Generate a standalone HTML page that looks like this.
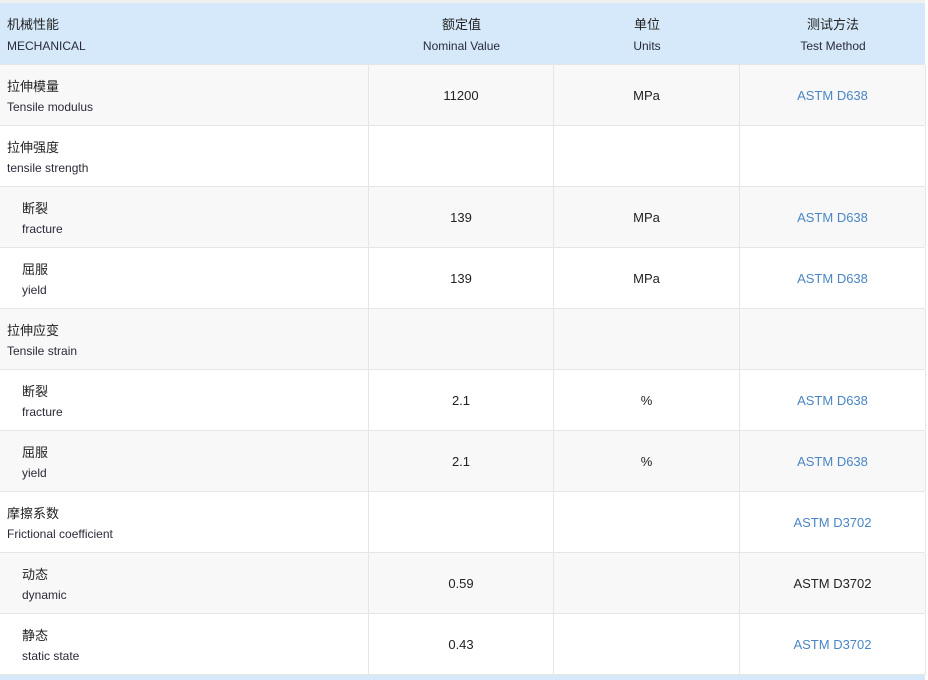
<!DOCTYPE html>
<html><head><meta charset="utf-8"><style>
body{margin:0;width:928px;height:680px;background:#fff;overflow:hidden;font-family:"Liberation Sans","Noto Sans CJK SC",sans-serif;color:#222;}
.top{position:absolute;left:0;top:0;width:925px;height:3px;background:#f0f0f0}
.r{position:absolute;left:0;width:925px;height:60px;border-bottom:1px solid #e6e6e6;}
.c{position:absolute;top:0;height:60px;border-right:1px solid #e6e6e6;box-sizing:border-box;}
.c1{left:0;width:369px}.c2{left:369px;width:185px;text-align:center}.c3{left:554px;width:186px;text-align:center}.c4{left:740px;width:186px;text-align:center}
.zh{position:absolute;left:7px;top:11px;font-size:13px}
.en{position:absolute;left:7px;top:35px;font-size:12px;color:#2a2a3a}
.sub .zh,.sub .en{left:22px}
.v{line-height:62px;font-size:13px}
.b{color:#4a86c5}
.h{background:#d5e9fb}
.h .c{border-right:none}
.h .en{top:36px}
.h .c2 .zh,.h .c3 .zh,.h .c4 .zh,.h .c2 .en,.h .c3 .en,.h .c4 .en{left:0;width:100%;text-align:center}
.g{background:#f8f8f8}
.bot{position:absolute;left:0;top:675px;width:925px;height:5px;background:#d5e9fb}
</style></head><body>
<div class="top"></div>
<div class="r h" style="top:3px;height:61px">
<div class="c c1"><div class="zh">机械性能</div><div class="en">MECHANICAL</div></div>
<div class="c c2"><div class="zh">额定值</div><div class="en">Nominal Value</div></div>
<div class="c c3"><div class="zh">单位</div><div class="en">Units</div></div>
<div class="c c4"><div class="zh">测试方法</div><div class="en">Test Method</div></div>
</div>
<div class="r g" style="top:65px"><div class="c c1"><div class="zh">拉伸模量</div><div class="en">Tensile modulus</div></div><div class="c c2 v">11200</div><div class="c c3 v">MPa</div><div class="c c4 v b">ASTM D638</div></div>
<div class="r" style="top:126px"><div class="c c1"><div class="zh">拉伸强度</div><div class="en">tensile strength</div></div><div class="c c2"></div><div class="c c3"></div><div class="c c4"></div></div>
<div class="r g sub" style="top:187px"><div class="c c1"><div class="zh">断裂</div><div class="en">fracture</div></div><div class="c c2 v">139</div><div class="c c3 v">MPa</div><div class="c c4 v b">ASTM D638</div></div>
<div class="r sub" style="top:248px"><div class="c c1"><div class="zh">屈服</div><div class="en">yield</div></div><div class="c c2 v">139</div><div class="c c3 v">MPa</div><div class="c c4 v b">ASTM D638</div></div>
<div class="r g" style="top:309px"><div class="c c1"><div class="zh">拉伸应变</div><div class="en">Tensile strain</div></div><div class="c c2"></div><div class="c c3"></div><div class="c c4"></div></div>
<div class="r sub" style="top:370px"><div class="c c1"><div class="zh">断裂</div><div class="en">fracture</div></div><div class="c c2 v">2.1</div><div class="c c3 v">%</div><div class="c c4 v b">ASTM D638</div></div>
<div class="r g sub" style="top:431px"><div class="c c1"><div class="zh">屈服</div><div class="en">yield</div></div><div class="c c2 v">2.1</div><div class="c c3 v">%</div><div class="c c4 v b">ASTM D638</div></div>
<div class="r" style="top:492px"><div class="c c1"><div class="zh">摩擦系数</div><div class="en">Frictional coefficient</div></div><div class="c c2"></div><div class="c c3"></div><div class="c c4 v b">ASTM D3702</div></div>
<div class="r g sub" style="top:553px"><div class="c c1"><div class="zh">动态</div><div class="en">dynamic</div></div><div class="c c2 v">0.59</div><div class="c c3"></div><div class="c c4 v">ASTM D3702</div></div>
<div class="r sub" style="top:614px"><div class="c c1"><div class="zh">静态</div><div class="en">static state</div></div><div class="c c2 v">0.43</div><div class="c c3"></div><div class="c c4 v b">ASTM D3702</div></div>
<div class="bot"></div>
</body></html>
